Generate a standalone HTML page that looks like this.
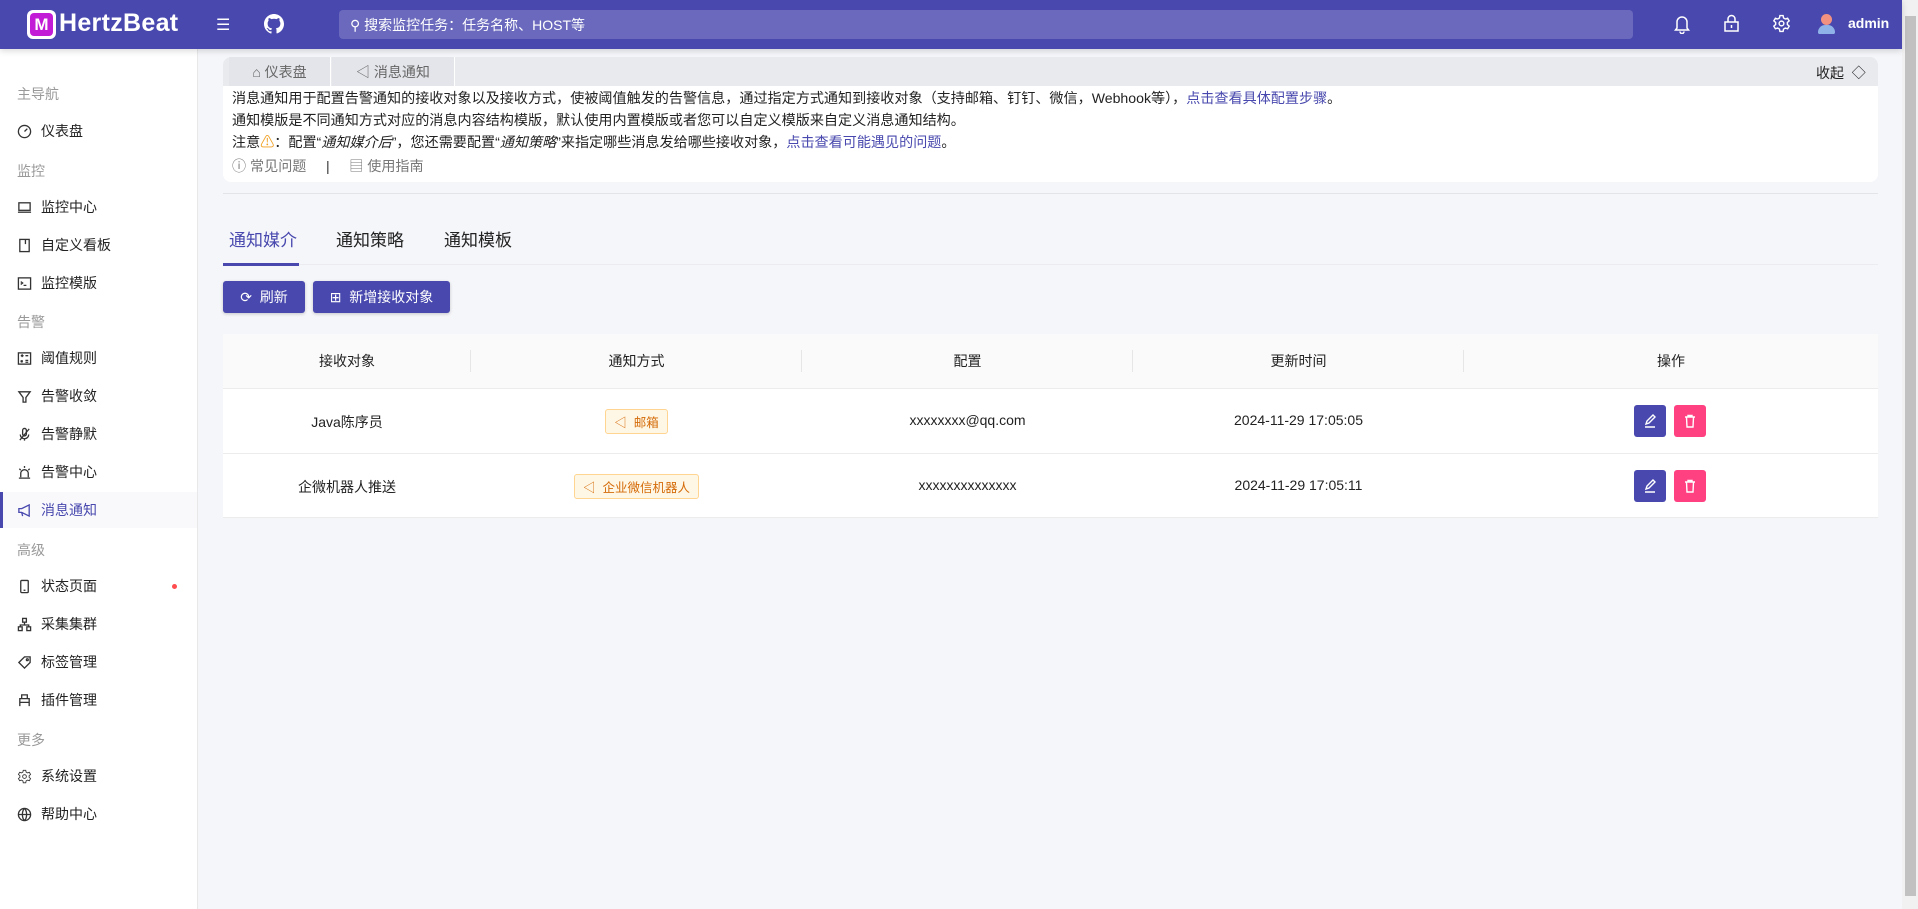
<!DOCTYPE html>
<html><head><meta charset="utf-8">
<style>
*{box-sizing:border-box;margin:0;padding:0}
body{width:1918px;height:909px;overflow:hidden;background:#f5f6fa;font-family:"Liberation Sans","Noto Sans CJK SC",sans-serif;color:#222;position:relative;font-size:14px}
.abs{position:absolute}
#hdr{left:0;top:0;width:1902px;height:49px;background:#4848ae;box-shadow:0 2px 6px rgba(0,0,0,.15);z-index:2}
#side{left:0;top:49px;width:198px;height:860px;background:#fff;border-right:1px solid #e8e8e8}
.grp{position:absolute;left:17px;color:#999;font-size:14px}
.item{position:absolute;left:0;width:197px;height:36px;display:flex;align-items:center;padding-left:17px;font-size:14px;color:#222}
.item svg{width:15px;height:15px;margin-right:9px;fill:none;stroke:#333;stroke-width:1.4}
.item.act{background:#f9f9fc;color:#4848ae;border-left:3px solid #4848ae;padding-left:14px}
.item.act svg{stroke:#4848ae}
#scroll{left:1902px;top:0;width:16px;height:909px;background:#f1f1f1}
#thumb{left:1905px;top:18px;width:11px;height:770px;background:#c1c1c1}
.card{left:223px;top:57px;width:1655px;height:125px;background:#fff;border-radius:8px;overflow:hidden}
.bc{left:0;top:0;width:1655px;height:29px;background:#e9eaee}
.bct{position:absolute;top:0;height:29px;display:flex;align-items:center;justify-content:center;color:#666;font-size:14px;background:#e4e5ea;border-right:1px solid #fff}
.info{position:absolute;left:9px;font-size:14.1px;color:#222;white-space:nowrap}
.info a{color:#4848ae;text-decoration:none}
.tab{position:absolute;top:226px;font-size:17px;color:#222}
.btn{position:absolute;top:281px;height:32px;background:#4848ae;color:#fff;border-radius:3px;display:flex;align-items:center;justify-content:center;font-size:14px;box-shadow:0 1px 3px rgba(0,0,0,.2)}
.tbl{left:223px;top:334px;width:1655px;height:183px;background:#fff}
.th{position:absolute;top:0;height:54px;line-height:54px;text-align:center;font-size:14px;background:#fafafa}
.sep{position:absolute;top:16px;width:1px;height:22px;background:#e6e6e6}
.td{position:absolute;text-align:center;font-size:14px;color:#222}
.tag{display:inline-block;border:1px solid #ffd591;background:#fff7e6;color:#d46b08;font-size:12.5px;padding:2px 8px;border-radius:3px}
.ab{position:absolute;width:32px;height:32px;border-radius:3px;display:flex;align-items:center;justify-content:center}
</style></head><body>
<div id="hdr" class="abs">
 <div class="abs" style="left:27px;top:10px;width:29px;height:29px;background:#fff;border-radius:6px"><div style="position:absolute;left:3px;top:3px;width:23px;height:23px;background:#c21cd6;border-radius:4px;color:#fff;font-weight:bold;font-size:17px;line-height:23px;text-align:center">M</div></div>
 <div class="abs" style="left:59px;top:9px;color:#fff;font-size:25px;font-weight:bold;letter-spacing:.3px">HertzBeat</div>
 <div class="abs" style="left:216px;top:15px;color:#fff;font-size:16px">☰</div>
 <svg class="abs" style="left:264px;top:14px" width="20" height="20" viewBox="0 0 16 16"><path fill="#fff" d="M8 0C3.6 0 0 3.6 0 8c0 3.5 2.3 6.5 5.5 7.6.4.1.5-.2.5-.4v-1.4c-2.2.5-2.7-1-2.7-1-.4-.9-.9-1.200-.9-1.200-.7-.5.1-.5.1-.5.8.1 1.200.8 1.200.8.7 1.200 1.9.9 2.300.7.1-.5.3-.9.5-1.100-1.800-.2-3.600-.9-3.600-4 0-.9.3-1.600.8-2.100-.1-.2-.4-1 .1-2.100 0 0 .7-.2 2.200.8.6-.2 1.300-.3 2-.3s1.400.1 2 .3c1.500-1 2.200-.8 2.200-.8.4 1.100.2 1.900.1 2.100.5.6.8 1.300.8 2.100 0 3.100-1.900 3.700-3.600 3.900.3.3.5.8.5 1.500v2.200c0 .2.1.5.6.4C13.700 14.500 16 11.500 16 8c0-4.400-3.600-8-8-8z"/></svg>
 <div class="abs" style="left:339px;top:10px;width:1294px;height:29px;background:#6a69bd;border-radius:4px"></div>
 <div class="abs" style="left:350px;top:15px;color:#fff;font-size:14px">⚲&nbsp;搜索监控任务：任务名称、HOST等</div>
 <svg class="abs" style="left:1673px;top:14px" width="18" height="20" viewBox="0 0 18 20" fill="none" stroke="#fff" stroke-width="1.5"><path d="M4 14V8a5 5 0 0 1 10 0v6l1.5 2h-13z M7 17.5a2 2 0 0 0 4 0"/></svg>
 <svg class="abs" style="left:1723px;top:14px" width="17" height="19" viewBox="0 0 17 19" fill="none" stroke="#fff" stroke-width="1.5"><rect x="2" y="8" width="13" height="9"/><path d="M5 8V5a3.5 3.5 0 0 1 7 0v3M8.5 11v3"/></svg>
 <svg class="abs" style="left:1772px;top:14px" width="19" height="19" viewBox="0 0 24 24" fill="none" stroke="#fff" stroke-width="1.8"><circle cx="12" cy="12" r="3"/><path d="M10 2h4l.6 3 2.2 1.3 2.9-1 2 3.4-2.3 2v2.6l2.3 2-2 3.4-2.9-1-2.2 1.3-.6 3h-4l-.6-3-2.2-1.3-2.9 1-2-3.4 2.3-2v-2.6l-2.3-2 2-3.4 2.9 1L9.4 5z"/></svg>
 <div class="abs" style="left:1821px;top:14px;width:11px;height:11px;border-radius:50%;background:#f39181"></div>
 <div class="abs" style="left:1818px;top:25px;width:17px;height:9px;border-radius:8px 8px 2px 2px;background:#8fb2e8"></div>
 <div class="abs" style="left:1848px;top:15px;color:#fff;font-size:14px;font-weight:bold">admin</div>
</div>
<div id="scroll" class="abs"></div><div id="thumb" class="abs" style="top:16px;height:880px"></div>

<div id="side" class="abs">
 <div class="grp" style="top:35px">主导航</div>
 <div class="item" style="top:64px"><svg viewBox="0 0 16 16"><circle cx="8" cy="8" r="6.5"/><path d="M8 8l3-3"/></svg>仪表盘</div>
 <div class="grp" style="top:112px">监控</div>
 <div class="item" style="top:140px"><svg viewBox="0 0 16 16"><rect x="2" y="3" width="12" height="8"/><path d="M1 13h14"/></svg>监控中心</div>
 <div class="item" style="top:178px"><svg viewBox="0 0 16 16"><rect x="3" y="1.5" width="10" height="13"/><path d="M9 1.5v5"/></svg>自定义看板</div>
 <div class="item" style="top:216px"><svg viewBox="0 0 16 16"><rect x="1.5" y="2" width="13" height="12"/><path d="M4 6l2 1.5L4 9M7 10h3"/></svg>监控模版</div>
 <div class="grp" style="top:263px">告警</div>
 <div class="item" style="top:291px"><svg viewBox="0 0 16 16"><rect x="1.5" y="2" width="13" height="12"/><path d="M4 5h3M5.5 3.5v3M9 5h3M4 10l2 2M6 10l-2 2M9 10h3M9 12h3"/></svg>阈值规则</div>
 <div class="item" style="top:329px"><svg viewBox="0 0 16 16"><path d="M2 3h12l-4.5 6v5h-3V9z"/></svg>告警收敛</div>
 <div class="item" style="top:367px"><svg viewBox="0 0 16 16"><rect x="6" y="1.5" width="4" height="8" rx="2"/><path d="M3.5 8a4.5 4.5 0 0 0 9 0M8 12.5v2M3 14L13 2"/></svg>告警静默</div>
 <div class="item" style="top:405px"><svg viewBox="0 0 16 16"><path d="M4 13V9a4 4 0 0 1 8 0v4M2 14h12M8 1v2M2.5 4l1.5 1.5M13.5 4L12 5.5"/></svg>告警中心</div>
 <div class="item act" style="top:443px"><svg viewBox="0 0 16 16"><path d="M2 6h3l8-4v12L5 10H2zM5 10l1 4"/></svg>消息通知</div>
 <div class="grp" style="top:491px">高级</div>
 <div class="item" style="top:519px"><svg viewBox="0 0 16 16"><rect x="4" y="1.5" width="8" height="13" rx="1"/><path d="M7 12h2"/></svg>状态页面</div>
 <div class="abs" style="left:172px;top:535px;width:5px;height:5px;border-radius:50%;background:#ff4d4f"></div>
 <div class="item" style="top:557px"><svg viewBox="0 0 16 16"><rect x="6" y="1.5" width="4" height="4"/><rect x="1.5" y="10.5" width="4" height="4"/><rect x="10.5" y="10.5" width="4" height="4"/><path d="M8 5.5v3M3.5 10.5v-2h9v2"/></svg>采集集群</div>
 <div class="item" style="top:595px"><svg viewBox="0 0 16 16"><path d="M2 8l6-6h6v6l-6 6z"/><circle cx="11" cy="5" r="1"/></svg>标签管理</div>
 <div class="item" style="top:633px"><svg viewBox="0 0 16 16"><path d="M3 14V6h10v8M5 6V2h6v4M3 10h10"/></svg>插件管理</div>
 <div class="grp" style="top:681px">更多</div>
 <div class="item" style="top:709px"><svg viewBox="0 0 24 24"><circle cx="12" cy="12" r="3"/><path d="M10 2h4l.6 3 2.2 1.3 2.9-1 2 3.4-2.3 2v2.6l2.3 2-2 3.4-2.9-1-2.2 1.3-.6 3h-4l-.6-3-2.2-1.3-2.9 1-2-3.4 2.3-2v-2.6l-2.3-2 2-3.4 2.9 1L9.4 5z"/></svg>系统设置</div>
 <div class="item" style="top:747px"><svg viewBox="0 0 16 16"><circle cx="8" cy="8" r="6.5"/><path d="M1.5 8h13M8 1.5c-3 3-3 10 0 13M8 1.5c3 3 3 10 0 13"/></svg>帮助中心</div>
</div>

<div class="card abs">
 <div class="bc abs"></div>
 <div class="bct" style="left:6px;width:102px">⌂&nbsp;仪表盘</div>
 <div class="bct" style="left:109px;width:123px">◁&nbsp;消息通知</div>
 <div class="abs" style="left:1593px;top:6px;font-size:14px;color:#222">收起&nbsp;&nbsp;◇</div>
 <div class="info" style="top:31px">消息通知用于配置告警通知的接收对象以及接收方式，使被阈值触发的告警信息，通过指定方式通知到接收对象（支持邮箱、钉钉、微信，Webhook等），<a>点击查看具体配置步骤</a>。</div>
 <div class="info" style="top:53px">通知模版是不同通知方式对应的消息内容结构模版，默认使用内置模版或者您可以自定义模版来自定义消息通知结构。</div>
 <div class="info" style="top:75px">注意<span style="color:#f0a020">⚠</span>：配置“<i>通知媒介后</i>”，您还需要配置“<i>通知策略</i>”来指定哪些消息发给哪些接收对象，<a>点击查看可能遇见的问题</a>。</div>
 <div class="info" style="top:99px;color:#777">ⓘ 常见问题 &nbsp;&nbsp;&nbsp;&nbsp;<span style="color:#333">|</span>&nbsp;&nbsp;&nbsp;&nbsp; ▤ 使用指南</div>
</div>
<div class="abs" style="left:223px;top:193px;width:1655px;height:1px;background:#e3e3e8"></div>

<div class="tab" style="left:229px;color:#4848ae">通知媒介</div>
<div class="tab" style="left:336px">通知策略</div>
<div class="tab" style="left:444px">通知模板</div>
<div class="abs" style="left:223px;top:264px;width:1655px;height:1px;background:#ececf0"></div>
<div class="abs" style="left:223px;top:263px;width:76px;height:3px;background:#4848ae"></div>

<div class="btn" style="left:223px;width:82px">⟳&nbsp;&nbsp;刷新</div>
<div class="btn" style="left:313px;width:137px">⊞&nbsp;&nbsp;新增接收对象</div>

<div class="tbl abs">
 <div class="th" style="left:0;width:1655px"></div>
 <div class="th" style="left:0;width:248px">接收对象</div>
 <div class="th" style="left:248px;width:331px">通知方式</div>
 <div class="th" style="left:579px;width:331px">配置</div>
 <div class="th" style="left:910px;width:331px">更新时间</div>
 <div class="th" style="left:1241px;width:414px">操作</div>
 <div class="sep" style="left:247px"></div><div class="sep" style="left:578px"></div><div class="sep" style="left:909px"></div><div class="sep" style="left:1240px"></div>
 <div class="abs" style="left:0;top:54px;width:1655px;height:1px;background:#ececec"></div>
 <div class="abs" style="left:0;top:119px;width:1655px;height:1px;background:#ececec"></div>
 <div class="abs" style="left:0;top:183px;width:1655px;height:1px;background:#ececec"></div>

 <div class="td" style="left:0;width:248px;top:78px">Java陈序员</div>
 <div class="td" style="left:248px;width:331px;top:75px"><span class="tag">◁&nbsp; 邮箱</span></div>
 <div class="td" style="left:579px;width:331px;top:78px">xxxxxxxx@qq.com</div>
 <div class="td" style="left:910px;width:331px;top:78px">2024-11-29 17:05:05</div>
 <div class="ab" style="left:1411px;top:71px;background:#4848ae"><svg width="16" height="16" viewBox="0 0 16 16" fill="none" stroke="#fff" stroke-width="1.4"><path d="M4 11l1-3 6-6 2 2-6 6zM3 14h10"/></svg></div>
 <div class="ab" style="left:1451px;top:71px;background:#ff4081"><svg width="16" height="16" viewBox="0 0 16 16" fill="none" stroke="#fff" stroke-width="1.4"><path d="M3 4h10M6 4V2.5h4V4M4.5 4l.5 10h6l.5-10"/></svg></div>

 <div class="td" style="left:0;width:248px;top:143px">企微机器人推送</div>
 <div class="td" style="left:248px;width:331px;top:140px"><span class="tag">◁&nbsp; 企业微信机器人</span></div>
 <div class="td" style="left:579px;width:331px;top:143px">xxxxxxxxxxxxxx</div>
 <div class="td" style="left:910px;width:331px;top:143px">2024-11-29 17:05:11</div>
 <div class="ab" style="left:1411px;top:136px;background:#4848ae"><svg width="16" height="16" viewBox="0 0 16 16" fill="none" stroke="#fff" stroke-width="1.4"><path d="M4 11l1-3 6-6 2 2-6 6zM3 14h10"/></svg></div>
 <div class="ab" style="left:1451px;top:136px;background:#ff4081"><svg width="16" height="16" viewBox="0 0 16 16" fill="none" stroke="#fff" stroke-width="1.4"><path d="M3 4h10M6 4V2.5h4V4M4.5 4l.5 10h6l.5-10"/></svg></div>
</div>
</body></html>
